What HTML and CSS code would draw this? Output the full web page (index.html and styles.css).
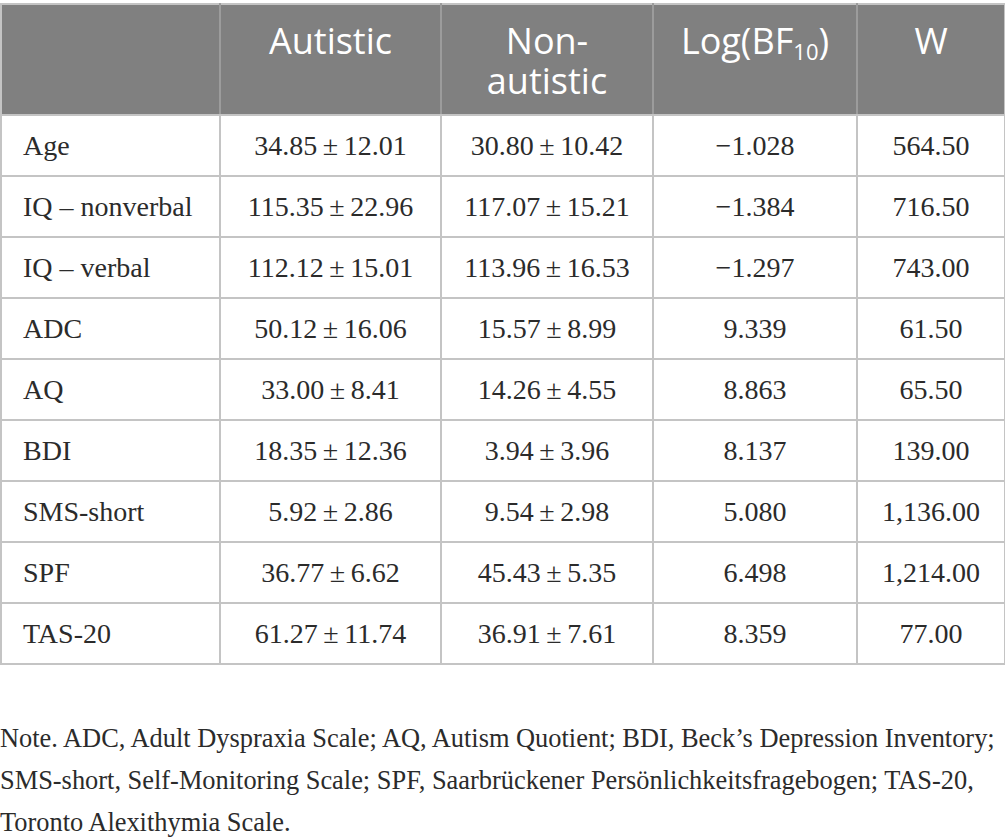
FILE: index.html
```html
<!DOCTYPE html>
<html lang="en">
<head>
<meta charset="utf-8">
<title>Participant characteristics</title>
<link rel="stylesheet" href="styles.css">
</head>
<body>
<div class="page">
<table class="data">
  <colgroup>
    <col class="c1"><col class="c2"><col class="c3"><col class="c4"><col class="c5">
  </colgroup>
  <thead>
    <tr>
      <th></th>
      <th>Autistic</th>
      <th>Non-<br>autistic</th>
      <th>Log(BF<sub>10</sub>)</th>
      <th>W</th>
    </tr>
  </thead>
  <tbody>
    <tr><td>Age</td><td>34.85&#8201;±&#8201;12.01</td><td>30.80&#8201;±&#8201;10.42</td><td>−1.028</td><td>564.50</td></tr>
    <tr><td>IQ – nonverbal</td><td>115.35&#8201;±&#8201;22.96</td><td>117.07&#8201;±&#8201;15.21</td><td>−1.384</td><td>716.50</td></tr>
    <tr><td>IQ – verbal</td><td>112.12&#8201;±&#8201;15.01</td><td>113.96&#8201;±&#8201;16.53</td><td>−1.297</td><td>743.00</td></tr>
    <tr><td>ADC</td><td>50.12&#8201;±&#8201;16.06</td><td>15.57&#8201;±&#8201;8.99</td><td>9.339</td><td>61.50</td></tr>
    <tr><td>AQ</td><td>33.00&#8201;±&#8201;8.41</td><td>14.26&#8201;±&#8201;4.55</td><td>8.863</td><td>65.50</td></tr>
    <tr><td>BDI</td><td>18.35&#8201;±&#8201;12.36</td><td>3.94&#8201;±&#8201;3.96</td><td>8.137</td><td>139.00</td></tr>
    <tr><td>SMS-short</td><td>5.92&#8201;±&#8201;2.86</td><td>9.54&#8201;±&#8201;2.98</td><td>5.080</td><td>1,136.00</td></tr>
    <tr><td>SPF</td><td>36.77&#8201;±&#8201;6.62</td><td>45.43&#8201;±&#8201;5.35</td><td>6.498</td><td>1,214.00</td></tr>
    <tr><td>TAS-20</td><td>61.27&#8201;±&#8201;11.74</td><td>36.91&#8201;±&#8201;7.61</td><td>8.359</td><td>77.00</td></tr>
  </tbody>
</table>
<p class="note">Note. ADC, Adult Dyspraxia Scale; AQ, Autism Quotient; BDI, Beck’s Depression Inventory;<br>SMS-short, Self-Monitoring Scale; SPF, Saarbrückener Persönlichkeitsfragebogen; TAS-20,<br>Toronto Alexithymia Scale.</p>
</div>
</body>
</html>
```

FILE: styles.css
```css
html, body {
  margin: 0;
  padding: 0;
  background: #ffffff;
}

.page {
  padding-top: 3px;
  width: 1005px;
}

.data {
  width: 1004px;
  border-collapse: collapse;
  table-layout: fixed;
  font-family: "Liberation Serif", "Times New Roman", serif;
  font-size: 28px;
  color: #2b2b2b;
}

.c1 { width: 219px; }
.c2 { width: 221px; }
.c3 { width: 212px; }
.c4 { width: 204px; }
.c5 { width: 148px; }

.data th {
  background: #808080;
  color: #ffffff;
  font-family: "Open Sans", "Noto Sans", sans-serif;
  font-weight: 400;
  font-size: 36px;
  line-height: 40px;
  vertical-align: top;
  text-align: center;
  padding: 16px 6px 13px;
  border-top: 2px solid #c4c4c4;
  border-bottom: 2px solid #c4c4c4;
  border-left: 2px solid #9c9c9c;
  border-right: 2px solid #9c9c9c;
}

.data th:first-child {
  border-left: 2px solid #c4c4c4;
}

.data th:last-child {
  border-right: 2px solid #c4c4c4;
}

.data th sub {
  font-size: 22px;
  line-height: 0;
  vertical-align: -6px;
}

.data td {
  height: 59px;
  padding: 0 6px;
  border: 2px solid #c4c4c4;
  font-family: "Liberation Serif", "Times New Roman", serif;
  font-size: 28px;
  text-align: center;
  vertical-align: middle;
  white-space: nowrap;
}

.data td:first-child {
  text-align: left;
  padding-left: 21px;
}

.note {
  margin: 52px 0 0;
  font-family: "Liberation Serif", "Times New Roman", serif;
  font-size: 26.4px;
  line-height: 42px;
  white-space: nowrap;
  color: #2b2b2b;
}
```
